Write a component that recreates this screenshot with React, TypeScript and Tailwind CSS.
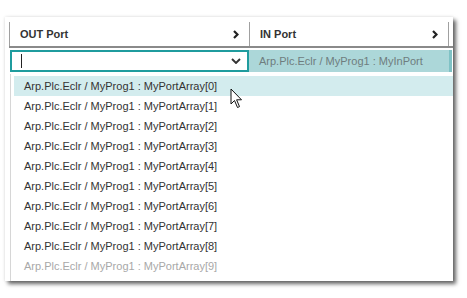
const items = Array.from({ length: 10 }, (_, i) => `Arp.Plc.Eclr / MyProg1 : MyPortArray[${i}]`)

function ChevronRight() {
  return (
    <svg width="6" height="9" viewBox="0 0 6 9" className="shrink-0">
      <polyline points="1,1 4.5,4.5 1,8" fill="none" stroke="#222" strokeWidth="2.2" />
    </svg>
  )
}

function ChevronDown() {
  return (
    <svg width="10" height="6" viewBox="0 0 10 6" className="shrink-0">
      <polyline points="1,1 5,5 9,1" fill="none" stroke="#333" strokeWidth="1.9" />
    </svg>
  )
}

function Pointer() {
  return (
    <svg width="14" height="22" viewBox="0 0 14 22" className="pointer-events-none absolute left-[219px] top-[14px]">
      <path
        d="M1 1 L1 16 L4.5 12.5 L7.5 19.5 L9.5 18.6 L6.6 11.8 L11.5 11.8 Z"
        fill="#fff"
        stroke="#111"
        strokeWidth="1"
        strokeLinejoin="miter"
      />
    </svg>
  )
}

export default function App() {
  return (
    <div
      className="min-h-screen bg-white pl-[5px] pt-[17px] text-[11px] text-[#333]"
      style={{ fontFamily: '"Liberation Sans", Arial, sans-serif' }}
    >
      <div className="relative h-[264px] w-[448px] overflow-hidden bg-white shadow-[3px_3px_4px_rgba(0,0,0,0.6),0_0_3px_rgba(0,0,0,0.12)]">
        <div className="ml-[4px] mt-[5px] w-[444px]">
          {/* header */}
          <div className="flex h-[26px] border-b-2 border-[#8a8a8a]">
            <div className="flex w-[240px] items-center justify-between border-l border-[#a0a0a0] pl-[10px] pr-[10px] pt-[1px] font-bold text-[#333]">
              <span>OUT Port</span>
              <ChevronRight />
            </div>
            <div className="flex w-[200px] items-center justify-between border-l border-r border-[#a0a0a0] pl-[10px] pr-[10px] pt-[1px] font-bold text-[#333]">
              <span>IN Port</span>
              <ChevronRight />
            </div>
          </div>

          {/* edit row */}
          <div className="mt-[2px] flex h-[22px]">
            <div className="ml-[1px] flex w-[239px] items-center justify-between border-2 border-[#1f9c9e] pl-[9px] pr-[6px]">
              <span className="h-[14px] w-px bg-[#222]" />
              <ChevronDown />
            </div>
            <div className="flex w-[200px] items-center bg-[#acd7d9] pl-[10px] text-[#6f7d7e]">
              Arp.Plc.Eclr / MyProg1 : MyInPort
            </div>
            <div className="w-[3px] bg-[#7fc2c5]" />
          </div>
        </div>

        {/* dropdown list */}
        <div className="absolute left-[5px] top-[57px] bottom-0 right-0 border-l border-[#d6d6d6] bg-white pl-[3px] pt-[2px]">
          {items.map((text, i) => (
            <div
              key={text}
              className={`flex h-[20px] items-center pl-[10px] ${i === 0 ? 'bg-[#d3ecee]' : ''} ${
                i === 9 ? 'text-[#a8a8a8]' : 'text-[#333]'
              }`}
            >
              {text}
            </div>
          ))}
          <Pointer />
        </div>
      </div>
    </div>
  )
}
